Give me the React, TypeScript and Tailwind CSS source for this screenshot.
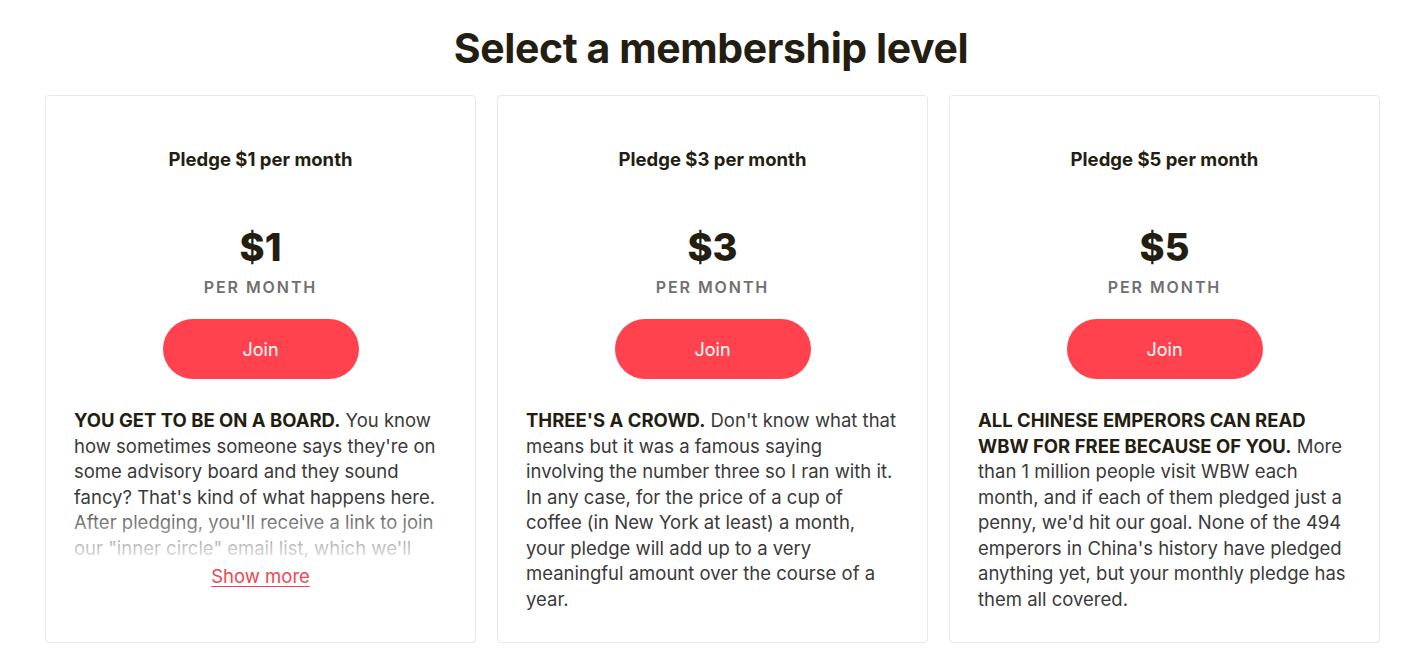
const tiers = [
  {
    amount: 1,
    lead: "YOU GET TO BE ON A BOARD.",
    body: " You know how sometimes someone says they're on some advisory board and they sound fancy? That's kind of what happens here. After pledging, you'll receive a link to join our \"inner circle\" email list, which we'll use to ask for your opinion on things.",
    clamp: true,
  },
  {
    amount: 3,
    lead: "THREE'S A CROWD.",
    body: " Don't know what that means but it was a famous saying involving the number three so I ran with it. In any case, for the price of a cup of coffee (in New York at least) a month, your pledge will add up to a very meaningful amount over the course of a year.",
    clamp: false,
  },
  {
    amount: 5,
    lead: "ALL CHINESE EMPERORS CAN READ WBW FOR FREE BECAUSE OF YOU.",
    body: " More than 1 million people visit WBW each month, and if each of them pledged just a penny, we'd hit our goal. None of the 494 emperors in China's history have pledged anything yet, but your monthly pledge has them all covered.",
    clamp: false,
  },
];

function TierCard({ tier }: { tier: (typeof tiers)[number] }) {
  return (
    <div className="flex flex-col items-center rounded-[4px] border border-[#e8e8e8] bg-white px-[28px] pb-[30px] pt-[50px]">
      <div className="text-[18.5px] font-bold leading-[26px] text-[#241e12]">
        Pledge ${tier.amount} per month
      </div>
      <div className="mt-[53px] text-[38px] font-extrabold leading-[44px] text-[#241e12]">
        ${tier.amount}
      </div>
      <div className="mt-[8px] text-[16px] font-semibold leading-[20px] tracking-[0.12em] text-[#707070]">
        PER MONTH
      </div>
      <button
        type="button"
        className="mt-[22px] h-[60px] w-[196px] shrink-0 rounded-full bg-[#ff424d] text-[18px] text-white"
      >
        Join
      </button>
      {/* Pierwsza karta jest przycięta i wygaszona do białego, jak w oryginale. */}
      <div className="relative mt-[29px] w-full">
        <p
          className={
            tier.clamp
              ? "h-[153px] overflow-hidden text-[18.5px] leading-[25.5px] text-[#3a3a3a]"
              : "text-[18.5px] leading-[25.5px] text-[#3a3a3a]"
          }
        >
          <b className="font-bold text-[#241e12]">{tier.lead}</b>
          {tier.body}
        </p>
        {tier.clamp && (
          <div className="absolute inset-x-0 bottom-0 h-[60px] bg-gradient-to-b from-white/0 to-white/90" />
        )}
      </div>
      {tier.clamp && (
        <button
          type="button"
          className="mt-[3px] text-[18.5px] leading-[24px] text-[#f04652] underline decoration-1 underline-offset-[3px]"
        >
          Show more
        </button>
      )}
    </div>
  );
}

export default function App() {
  return (
    <div
      className="min-h-screen bg-white"
      style={{ fontFamily: "Inter, 'Noto Sans', sans-serif" }}
    >
      <h1 className="pt-[24px] text-center text-[41px] font-bold leading-[48px] tracking-[-0.01em] text-[#241e12]">
        Select a membership level
      </h1>
      <div className="mt-[23px] grid grid-cols-3 gap-[21px] pl-[45px] pr-[42px]">
        {tiers.map((tier) => (
          <TierCard key={tier.amount} tier={tier} />
        ))}
      </div>
    </div>
  );
}
